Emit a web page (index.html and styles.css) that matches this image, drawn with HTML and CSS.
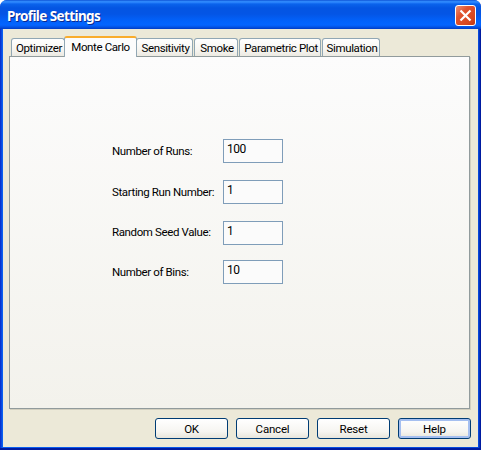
FILE: index.html
```html
<!DOCTYPE html>
<html lang="en">
<head>
<meta charset="utf-8">
<title>Profile Settings</title>
<link rel="stylesheet" href="styles.css">
</head>
<body>
<div class="window">
  <header class="titlebar">
    <h1 class="title"><span>Profile Settings</span></h1>
    <button class="close" aria-label="Close">
      <svg width="13" height="13" viewBox="0 0 13 13"><path d="M1.5 1.5 11.5 11.5M11.5 1.5 1.5 11.5" stroke="#fff" stroke-width="2.2"/></svg>
    </button>
  </header>
  <main class="body">
    <nav class="tabs">
      <div class="tab optimizer"><span>Optimizer</span></div>
      <div class="tab active"><span>Monte Carlo</span></div>
      <div class="tab sensitivity"><span>Sensitivity</span></div>
      <div class="tab smoke"><span>Smoke</span></div>
      <div class="tab plot"><span>Parametric Plot</span></div>
      <div class="tab simulation"><span>Simulation</span></div>
    </nav>
    <section class="pane">
      <label class="row"><span class="label">Number of Runs:</span><input type="text" value="100"></label>
      <label class="row"><span class="label">Starting Run Number:</span><input type="text" value="1"></label>
      <label class="row seed-row"><span class="label">Random Seed Value:</span><input type="text" value="1"></label>
      <label class="row"><span class="label">Number of Bins:</span><input type="text" value="10"></label>
    </section>
    <footer class="actions">
      <button class="btn">OK</button>
      <button class="btn">Cancel</button>
      <button class="btn">Reset</button>
      <button class="btn default">Help</button>
    </footer>
  </main>
</div>
</body>
</html>
```
FILE: styles.css
```css
* { box-sizing: border-box; }
body {
  margin: 0;
  background: #fff;
  font: 11.5px/14px Roboto, "Liberation Sans", sans-serif;
  letter-spacing: -0.38px;
  color: #000;
}
.window {
  width: 481px;
  height: 450px;
  display: flex;
  flex-direction: column;
  border-radius: 7px 7px 0 0;
  overflow: hidden;
  padding: 0 3px 3px;
  background: linear-gradient(90deg, #0733cf 0, #0733cf 1px, #0a5ff0 2px, #0a5ff0 3px, #0849da 477px, #0849da 479px, #001ba0 480px);
  box-shadow: inset 0 -2px #001ba0;
}
.titlebar {
  height: 29px;
  flex: none;
  margin: 0 -3px;
  padding: 1px 5px 0 7px;
  display: flex;
  align-items: center;
  justify-content: space-between;
  background: linear-gradient(#0847cf 0, #2a83f5 1px, #318bff 2px, #0a63ec 4px, #0455e2 8px, #0455e5 14px, #0262fb 21px, #0465ff 25px, #0454e6 27px, #003cc4 29px);
}
.title {
  margin: 0;
  padding-top: 2px;
  font: bold 13.5px/20px "Noto Sans", sans-serif;
  letter-spacing: -0.6px;
  color: #fff;
  text-shadow: 1px 1px #0a2a90;
}
.close {
  width: 21px;
  height: 21px;
  padding: 0;
  display: grid;
  place-items: center;
  border: 1px solid #fff;
  border-radius: 3px;
  background: linear-gradient(135deg, #ec9278, #e0532f 35%, #d84820 75%, #bd3510);
}
.body {
  flex: 1;
  display: flex;
  flex-direction: column;
  padding: 7px 7px 0 6px;
  background: #ece9d8;
}
.tabs {
  height: 20px;
  flex: none;
  display: flex;
  align-items: flex-end;
  padding-left: 2px;
}
.tab {
  height: 18px;
  display: flex;
  justify-content: center;
  align-items: center;
  padding: 0 0 0 2px;
  white-space: nowrap;
  border: 1px solid #91a7b4;
  border-bottom: 0;
  border-radius: 3px 3px 0 0;
  background: linear-gradient(#fff, #f7f6f2 60%, #eceae2);
}
.optimizer { width: 54px; }
.active {
  position: relative;
  z-index: 1;
  width: 73px;
  height: 21px;
  margin: 0 -1px -1px -1px;
  padding: 0 0 2px;
  background: #fcfcfc;
  border-top: 2px solid #f9ac2c;
}
.sensitivity { width: 57px; }
.smoke { width: 44px; margin-left: 1px; }
.plot { width: 82px; margin-left: 1px; }
.simulation { width: 58px; margin-left: 1px; }
.pane {
  width: 461px;
  height: 353px;
  flex: none;
  padding: 82px 0 0 102px;
  border: 1px solid #919b9c;
  background: linear-gradient(#fcfcfc, #f3f2ec);
  box-shadow: 1px 1px #d2cfbf;
}
.row {
  display: flex;
  align-items: center;
  height: 24px;
  margin-bottom: 17px;
}
.seed-row { margin-bottom: 15px; }
.label {
  width: 111px;
  white-space: nowrap;
}
.seed-row .label { padding-bottom: 2px; }
input {
  width: 60px;
  height: 24px;
  padding: 0 3px 4px;
  border: 1px solid #7f9db9;
  background: #fbfbfb;
  font: inherit;
  font-size: 12px;
  letter-spacing: -0.5px;
  color: #000;
}
.actions {
  display: flex;
  justify-content: flex-end;
  gap: 8px;
  padding-top: 9px;
}
.btn {
  width: 73px;
  height: 21px;
  padding: 1px 0 0;
  border: 1px solid #003c74;
  border-radius: 3px;
  background: linear-gradient(#fff, #f6f5f1 65%, #e8e5db);
  font: inherit;
  letter-spacing: -0.2px;
  color: #000;
}
.default { box-shadow: inset 0 0 0 2px #a5bff0; }
```
